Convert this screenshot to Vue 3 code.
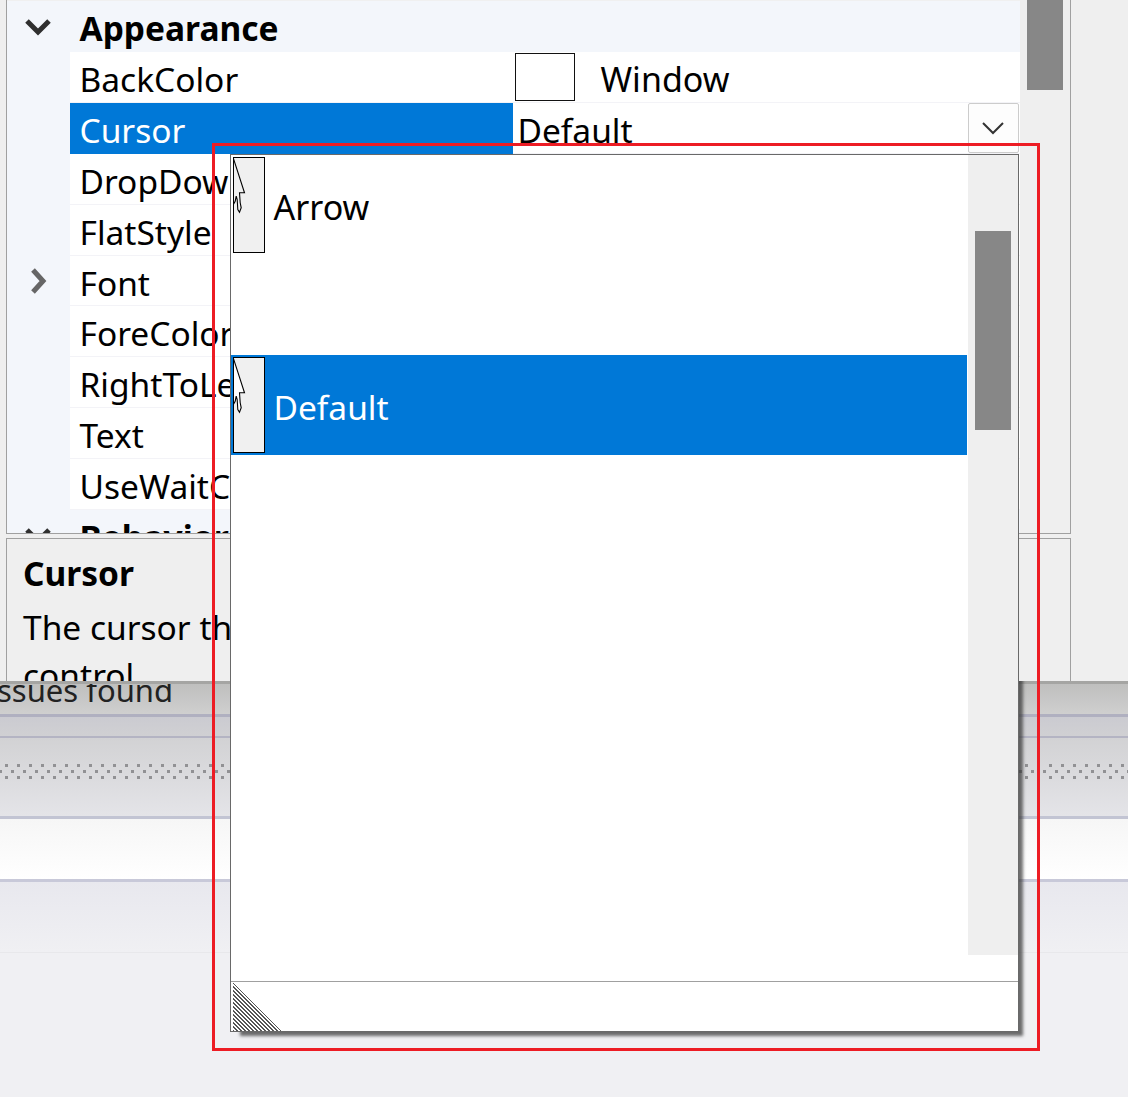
<script setup>
const rows = [
  { name: 'BackColor', swatch: true, value: 'Window' },
  { name: 'Cursor', selected: true, value: 'Default', dropdown: true },
  { name: 'DropDownAlign', value: 'Top' },
  { name: 'FlatStyle', value: 'Standard' },
  { name: 'Font', expandable: true, value: 'Segoe UI, 9pt' },
  { name: 'ForeColor', value: 'WindowText' },
  { name: 'RightToLeft', value: 'No' },
  { name: 'Text', value: '' },
  { name: 'UseWaitCursor', value: 'False' }
]
const items = [
  { label: 'Arrow', icon: true },
  { label: '', icon: false },
  { label: 'Default', icon: true, selected: true }
]
</script>

<template>
  <div class="app">
    <section class="designer">
      <div class="grid-wrap">
        <div class="grid">
          <div class="sheet">
            <div class="category first">
              <div class="gutter">
                <svg class="chev-down" width="28" height="18" viewBox="0 0 28 18"><path d="M3 3 L14 14 L25 3" /></svg>
              </div>
              <div class="cat-name">Appearance</div>
            </div>
            <div v-for="row in rows" :key="row.name" class="row">
              <div class="gutter">
                <svg v-if="row.expandable" class="chev-right" width="18" height="28" viewBox="0 0 18 28"><path d="M4 3 L14 14 L4 25" /></svg>
              </div>
              <div class="name" :class="{ selected: row.selected }">{{ row.name }}</div>
              <div class="value">
                <template v-if="row.swatch">
                  <span class="color-box"></span>
                  <span class="color-name">{{ row.value }}</span>
                </template>
                <span v-else class="value-text">{{ row.value }}</span>
                <span v-if="row.dropdown" class="drop-btn">
                  <svg width="22" height="14" viewBox="0 0 22 14"><path d="M1 2 L11 12 L21 2" /></svg>
                </span>
              </div>
            </div>
            <div class="category">
              <div class="gutter">
                <svg class="chev-down" width="28" height="18" viewBox="0 0 28 18"><path d="M3 3 L14 14 L25 3" /></svg>
              </div>
              <div class="cat-name">Behavior</div>
            </div>
          </div>
          <div class="scroll">
            <div class="scroll-thumb"></div>
          </div>
        </div>
      </div>
      <div class="desc">
        <div class="desc-title">Cursor</div>
        <div class="desc-text">The cursor that appears when the pointer moves over the<br />control.</div>
      </div>
    </section>

    <section class="bands">
      <div class="band b1"><span class="issues">issues found</span></div>
      <div class="rule r1"></div>
      <div class="band b2"></div>
      <div class="rule r2"></div>
      <div class="band b3">
        <svg class="dots" width="1128" height="15" viewBox="0 0 1128 15">
          <defs>
            <pattern id="dotgrid" width="12" height="15" patternUnits="userSpaceOnUse">
              <rect x="5" y="0" width="3" height="3" />
              <rect x="11" y="6" width="3" height="3" />
              <rect x="-1" y="6" width="3" height="3" />
              <rect x="5" y="12" width="3" height="3" />
            </pattern>
          </defs>
          <rect width="1128" height="15" fill="url(#dotgrid)" />
        </svg>
      </div>
      <div class="rule r3"></div>
      <div class="band b4"></div>
      <div class="rule r4"></div>
      <div class="band b5"></div>
      <div class="rule r5"></div>
    </section>

    <div class="popup-shadow"></div>
    <div class="popup">
      <div class="popup-main">
        <div class="list">
          <div v-for="(item, i) in items" :key="i" class="item" :class="{ selected: item.selected }">
            <span v-if="item.icon" class="cursor-box">
              <svg width="14" height="56" viewBox="0 0 14 56">
                <path class="arrow" d="M-0.8 -0.2 L10.5 34.8 L5.5 34.8 L6.2 44.8 L7.2 49.8 L5.5 54.2 L3.8 51.5 L3.2 41.5 L2.2 38.2 L1.2 43.2 L-0.2 45.8 L-0.8 40" />
              </svg>
            </span>
            <span class="item-label">{{ item.label }}</span>
          </div>
        </div>
        <div class="list-scroll">
          <div class="list-thumb"></div>
        </div>
      </div>
      <div class="popup-foot">
        <svg class="grip" width="48" height="48" viewBox="0 0 48 48" shape-rendering="crispEdges">
          <defs>
            <pattern id="hatch" width="4" height="4" patternUnits="userSpaceOnUse">
              <path d="M0 0h1v1H0z M1 0h1v1H1z M1 1h1v1H1z M2 1h1v1H2z M2 2h1v1H2z M3 2h1v1H3z M3 3h1v1H3z M0 3h1v1H0z" />
            </pattern>
          </defs>
          <polygon points="0,0 48,48 0,48" fill="url(#hatch)" />
        </svg>
      </div>
    </div>

    <div class="highlight"></div>
  </div>
</template>

<style>
html, body { margin: 0; background: #f0f0f3; }
</style>

<style scoped>
.app {
  position: relative;
  width: 1128px;
  height: 1097px;
  overflow: hidden;
  background: #f0f0f3;
  font-family: "Noto Sans", "Open Sans", sans-serif;
  font-size: 33.5px;
  color: #000;
}
.designer {
  height: 681px;
  box-sizing: border-box;
  padding: 0 57px 0 6px;
  background: #efefef;
  display: flex;
  flex-direction: column;
  gap: 4px;
  overflow: hidden;
}
.grid-wrap {
  height: 534px;
  flex: none;
  box-sizing: border-box;
  border: 1.5px solid #a0a0a0;
  border-top: 0;
  overflow: hidden;
}
.grid { display: flex; height: 100%; }
.sheet { width: 1012.5px; flex: none; background: #fff; }
.scroll { flex: 1; background: #efefef; padding: 0 7px; }
.scroll-thumb { height: 90px; background: #878787; }
.category {
  display: flex;
  height: 52px;
  background: #f3f6fb;
  box-sizing: border-box;
}
.category.first { border-top: 1px solid #f0f0f0; }
.gutter {
  width: 62.5px;
  flex: none;
  background: #f3f6fb;
  display: flex;
  align-items: center;
  justify-content: center;
}
.chev-down path { fill: none; stroke: #2f2f2f; stroke-width: 5; }
.chev-right path { fill: none; stroke: #666; stroke-width: 5; }
.cat-name { padding-left: 10px; font-weight: 700; line-height: 54px; }
.row { display: flex; height: 50.9px; box-sizing: border-box; }
.name {
  width: 443px;
  flex: none;
  box-sizing: border-box;
  padding-left: 10px;
  line-height: 54px;
  border-bottom: 1px solid #f3f3f7;
}
.name.selected { background: #0078d7; color: #fff; border-bottom-color: #0078d7; }
.value {
  flex: 1;
  display: flex;
  align-items: center;
  position: relative;
  padding-left: 5px;
  border-bottom: 1px solid #f3f3f7;
  line-height: 54px;
  white-space: nowrap;
}
.value-text, .color-name { position: relative; top: 2px; }
.color-box {
  width: 58px;
  height: 46px;
  margin-left: -3px;
  border: 1px solid #111;
  background: #fff;
}
.color-name { margin-left: 26px; font-size: 34px; }
.drop-btn {
  position: absolute;
  right: 1px;
  top: 0;
  width: 49px;
  height: 48px;
  border: 1.5px solid #ccc;
  border-radius: 2px;
  background: #fdfdfd;
  display: flex;
  align-items: center;
  justify-content: center;
}
.drop-btn path { fill: none; stroke: #333; stroke-width: 2; }
.desc {
  flex: 1;
  box-sizing: border-box;
  border: 1.5px solid #a0a0a0;
  border-bottom: 0;
  padding: 7px 16px 0;
  overflow: hidden;
  white-space: nowrap;
}
.desc-title { font-weight: 700; line-height: 54px; }
.desc-text { line-height: 48px; margin-top: 3px; }
.bands { display: flex; flex-direction: column; }
.band { overflow: hidden; }
.b1 {
  height: 33px;
  box-sizing: border-box;
  border-top: 3px solid #a5a5a3;
  background: linear-gradient(#bfbfbe, #cfcfcf);
  color: #222;
  font-size: 31px;
  line-height: 36px;
  white-space: nowrap;
}
.issues { display: block; margin: -12px 0 0 -11px; }
.rule { flex: none; }
.r1 { height: 3px; background: #b0b0c0; }
.b2 { height: 19px; background: linear-gradient(#cbcbd1, #d0d0d3); }
.r2 { height: 2px; background: #b4b4c3; }
.b3 { height: 78px; background: linear-gradient(#d2d2d4, #e4e4e8); }
.dots { display: block; margin-top: 26px; fill: #919194; }
.r3 { height: 3px; background: #c2c4d3; }
.b4 { height: 60px; background: linear-gradient(#f6f6f6, #fff); }
.r4 { height: 3px; background: #c8c9d9; }
.b5 { height: 70px; background: linear-gradient(#e8e8ee, #f0f0f3); }
.r5 { height: 1px; background: #e8e8eb; }

.popup-shadow {
  position: absolute;
  left: 236px;
  top: 670px;
  width: 783px;
  height: 362px;
  box-shadow: 4px 4px 3px rgba(50, 50, 50, 0.7);
  clip-path: inset(11px -10px -10px 0);
}
.popup {
  position: absolute;
  left: 230px;
  top: 154px;
  width: 789px;
  height: 878px;
  box-sizing: border-box;
  border: 1.5px solid #696969;
  background: #fff;
  display: flex;
  flex-direction: column;
}
.popup-main { display: flex; height: 800px; flex: none; }
.list { width: 737px; flex: none; }
.item {
  height: 100px;
  width: 736px;
  display: flex;
  align-items: center;
  font-size: 34px;
  color: #000;
  box-sizing: border-box;
  padding-left: 1.5px;
}
.item.selected { background: #0078d7; color: #fff; }
.cursor-box {
  width: 32px;
  height: 96px;
  flex: none;
  box-sizing: border-box;
  border: 1.5px solid #000;
  background: #f0f0f0;
  overflow: hidden;
}
.cursor-box svg { display: block; overflow: visible; }
.arrow { fill: none; stroke: #000; stroke-width: 1.1; }
.selected .arrow { fill: #fff; }
.item-label { margin-left: 9px; padding-top: 4px; line-height: 1; }
.selected .item-label { font-size: 33.5px; padding-top: 5px; }
.list-scroll { flex: 1; background: #efefef; padding: 76px 7px 0; }
.list-thumb { height: 199px; background: #878787; }
.popup-foot {
  margin-top: 26px;
  flex: 1;
  border-top: 1.5px solid #a0a0a0;
  padding: 1px 0 0 2px;
}
.grip { display: block; fill: #555; }
.highlight {
  position: absolute;
  left: 212px;
  top: 143px;
  width: 828px;
  height: 908px;
  box-sizing: border-box;
  border: 3px solid #ed1c24;
  pointer-events: none;
}
</style>
